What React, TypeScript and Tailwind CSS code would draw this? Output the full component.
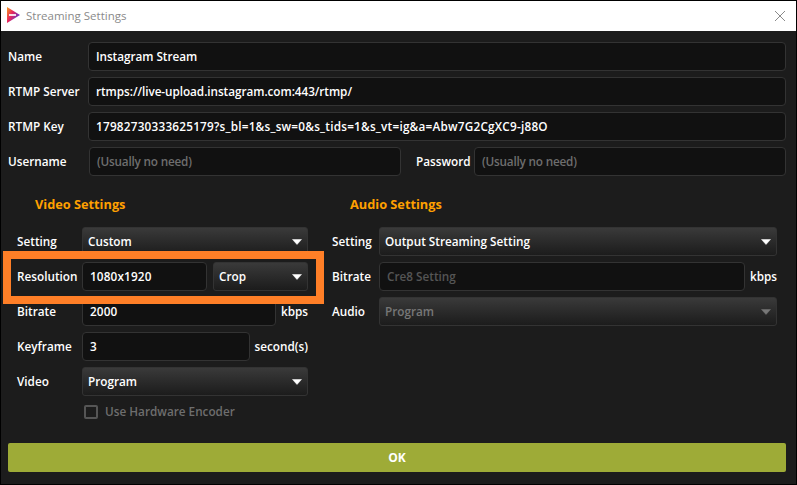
const font = { fontFamily: '"Open Sans", "Noto Sans", sans-serif' };

function Label({ children, w }: { children: React.ReactNode; w: string }) {
  return <span className={`${w} shrink-0 text-[11.75px] font-semibold text-white whitespace-nowrap`}>{children}</span>;
}

function Field({ value, placeholder, disabled, className = "" }: { value?: string; placeholder?: string; disabled?: boolean; className?: string }) {
  return (
    <div className={`flex h-[29px] items-center rounded-[4px] border border-[#333333] bg-[#111111] px-[7px] text-[11.75px] font-semibold whitespace-nowrap ${placeholder ? (disabled ? "text-[#555555]" : "text-[#6e6e6e]") : "text-white"} ${className}`}>
      {value ?? placeholder}
    </div>
  );
}

function Select({ value, disabled, className = "" }: { value: string; disabled?: boolean; className?: string }) {
  return (
    <div className={`flex h-[29px] items-center justify-between rounded-[3px] border border-[#333333] bg-gradient-to-b from-[#3a3a3a] to-[#1c1c1c] px-[5px] text-[11.75px] font-semibold ${disabled ? "text-[#777777]" : "text-white"} ${className}`}>
      <span>{value}</span>
      <svg width="10" height="6" viewBox="0 0 10 6"><path d="M0.5 0.5h9L5 5.5z" fill={disabled ? "#777777" : "#ffffff"} stroke={disabled ? "#777777" : "#ffffff"} strokeWidth="0.5" strokeLinejoin="round" /></svg>
    </div>
  );
}

function Row({ children, className = "" }: { children: React.ReactNode; className?: string }) {
  return <div className={`flex h-[29px] items-center ${className}`}>{children}</div>;
}

export default function App() {
  return (
    <div style={font} className="relative flex h-[485px] w-[797px] flex-col border border-black bg-[#1c1c1c]">
      <div className="flex h-[30px] shrink-0 items-center bg-white pl-[6px] pr-[10px]">
        <svg width="13" height="16" viewBox="0 0 13 16" className="mb-[2px]">
          <defs>
            <linearGradient id="g" x1="0" y1="0" x2="1" y2="0.6">
              <stop offset="0" stopColor="#f7a21b" />
              <stop offset="0.45" stopColor="#e8265e" />
              <stop offset="1" stopColor="#5a35d0" />
            </linearGradient>
          </defs>
          <path d="M0 0 L13 8 L0 16 Z" fill="url(#g)" />
          <rect x="2" y="7" width="7" height="2" fill="#ffffff" opacity="0.85" />
        </svg>
        <span className="ml-[6px] text-[11.5px] text-[#8a8a8a]">Streaming Settings</span>
        <svg width="12" height="12" viewBox="0 0 12 12" className="ml-auto" stroke="#8a8a8a" strokeWidth="1"><path d="M1 1l10 10M11 1L1 11" /></svg>
      </div>

      <div className="flex flex-1 flex-col pb-[12px] pl-[7px] pr-[10px] pt-[11px]">
        <div className="flex flex-col gap-[6px]">
          <Row><Label w="w-[80px]">Name</Label><Field value="Instagram Stream" className="flex-1 tracking-[-0.05px]" /></Row>
          <Row><Label w="w-[80px]">RTMP Server</Label><Field value="rtmps://live-upload.instagram.com:443/rtmp/" className="flex-1 tracking-[-0.05px]" /></Row>
          <Row><Label w="w-[80px]">RTMP Key</Label><Field value="17982730333625179?s_bl=1&s_sw=0&s_tids=1&s_vt=ig&a=Abw7G2CgXC9-j88O" className="flex-1 tracking-[0.22px]" /></Row>
          <Row>
            <Label w="w-[81px]">Username</Label>
            <Field placeholder="(Usually no need)" className="w-[312px] tracking-[-0.2px]" />
            <Label w="w-[58px] ml-[15px]">Password</Label>
            <Field placeholder="(Usually no need)" className="flex-1 tracking-[-0.2px]" />
          </Row>
        </div>

        <div className="mt-[17px] flex">
          <div className="ml-[9px] w-[291px] shrink-0">
            <h2 className="ml-[18px] h-[34px] text-[12.75px] leading-[22px] font-bold text-[#ffa000]">Video Settings</h2>
            <div className="flex flex-col gap-[6px]">
              <Row><Label w="w-[65px]">Setting</Label><Select value="Custom" className="flex-1" /></Row>
              <Row>
                <Label w="w-[65px]">Resolution</Label>
                <Field value="1080x1920" className="w-[125px] tracking-[0.15px]" />
                <Select value="Crop" className="ml-[6px] flex-1" />
              </Row>
              <Row>
                <Label w="w-[65px]">Bitrate</Label>
                <Field value="2000" className="w-[194px] tracking-[0.15px]" />
                <span className="ml-auto text-[11.75px] font-semibold text-white">kbps</span>
              </Row>
              <Row>
                <Label w="w-[65px]">Keyframe</Label>
                <Field value="3" className="w-[168px]" />
                <span className="ml-auto text-[11.75px] font-semibold text-white">second(s)</span>
              </Row>
              <Row><Label w="w-[65px]">Video</Label><Select value="Program" className="flex-1" /></Row>
            </div>
            <div className="ml-[67px] mt-[7px] flex items-center">
              <span className="h-[14px] w-[14px] rounded-[2px] border-2 border-[#555555]" />
              <span className="ml-[7px] text-[11.75px] font-semibold text-[#6e6e6e]">Use Hardware Encoder</span>
            </div>
          </div>

          <div className="ml-[24px] flex-1 pr-[9px]">
            <h2 className="ml-[18px] h-[34px] text-[12.75px] leading-[22px] font-bold text-[#ffa000]">Audio Settings</h2>
            <div className="flex flex-col gap-[6px]">
              <Row><Label w="w-[47px]">Setting</Label><Select value="Output Streaming Setting" className="flex-1" /></Row>
              <Row>
                <Label w="w-[47px]">Bitrate</Label>
                <Field placeholder="Cre8 Setting" disabled className="w-[366px]" />
                <span className="ml-auto text-[11.75px] font-semibold text-white">kbps</span>
              </Row>
              <Row><Label w="w-[47px]">Audio</Label><Select value="Program" disabled className="flex-1" /></Row>
            </div>
          </div>
        </div>

        <button className="mt-auto flex h-[29px] w-full shrink-0 items-center justify-center rounded-[2px] bg-[#9eab37] text-[12px] font-bold text-white">OK</button>
      </div>

      <div className="pointer-events-none absolute left-[2px] top-[250px] h-[53px] w-[321px] border-[8px] border-[#ff7f27]" />
    </div>
  );
}
